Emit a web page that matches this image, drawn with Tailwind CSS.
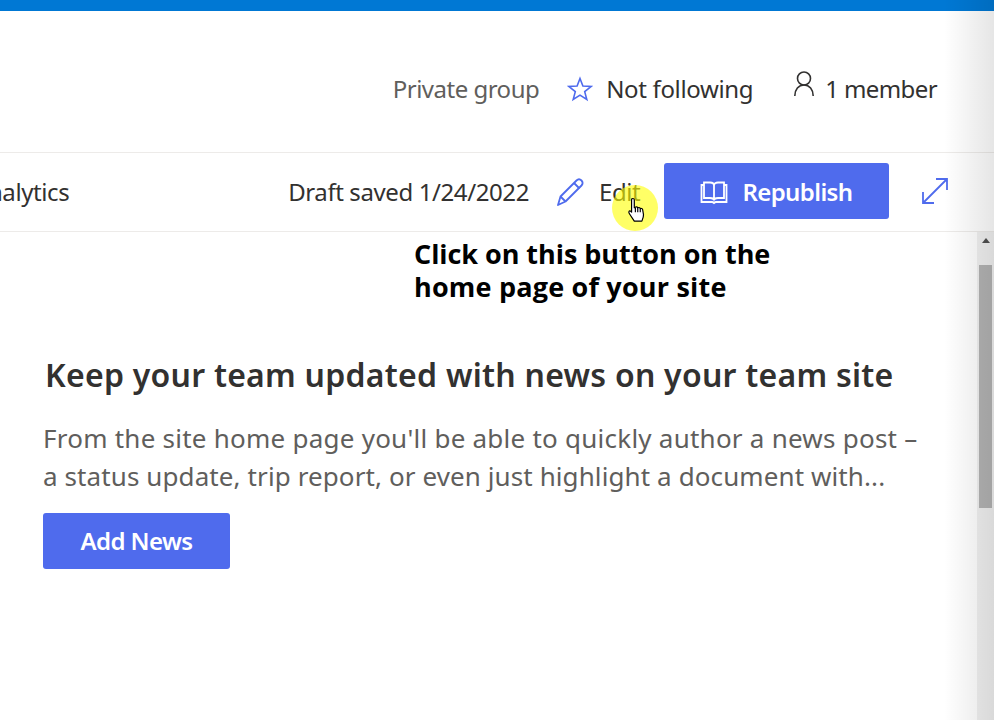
<!DOCTYPE html>
<html lang="en">
  <head>
    <meta charset="UTF-8" />
    <title>Team site</title>
    <script src="https://cdn.jsdelivr.net/npm/@tailwindcss/browser@4"></script>
  </head>
  <body class="bg-white overflow-hidden font-['Noto_Sans',sans-serif]">
    <div class="relative w-[994px] h-[720px] flex flex-col overflow-hidden">
      <!-- Top bar -->
      <div class="h-[11px] shrink-0 bg-[#0078d4]"></div>

      <!-- Group info -->
      <div class="h-[141px] shrink-0 flex items-start justify-end pt-[61px] pr-[57px] text-[24px] leading-[34px] tracking-[-0.5px] text-[#323130]">
        <span class="text-[#605e5c]">Private group</span>
        <svg class="ml-[28px] mt-[4px]" width="26" height="26" viewBox="0 0 26 26" fill="none" stroke="#4f6bed" stroke-width="1.6"><path d="M13 2.500l2.900 7.600 8.100.4-6.300 5.100 2.100 7.900L13 19.100l-6.800 4.400 2.100-7.900L2 10.500l8.100-.4z" /></svg>
        <span class="ml-[13px] tracking-[-0.35px]">Not following</span>
        <svg class="ml-[38px] -mt-[2px]" width="26" height="28" viewBox="0 0 26 28" fill="none" stroke="#323130" stroke-width="1.6"><circle cx="13" cy="8.500" r="6.500" /><path d="M3.800 26c0-6.500 3.800-11 9.200-11s9.200 4.500 9.200 11" /></svg>
        <span class="ml-[8px] tracking-[-0.6px]">1 member</span>
      </div>

      <!-- Toolbar -->
      <div class="h-[80px] shrink-0 flex items-center border-y border-[#edebe9] text-[24px] tracking-[-0.4px] text-[#323130]">
        <span class="-ml-[27px]">Analytics</span>
        <span class="ml-auto">Draft saved 1/24/2022</span>
        <svg class="ml-[26px]" width="32" height="32" viewBox="0 0 32 32" fill="none" stroke="#4f6bed" stroke-width="1.8" stroke-linejoin="round"><path d="M3 29l2.500-8.500L21.500 4.500c1.500-1.500 3.500-1.500 5 0s1.500 3.500 0 5L10.500 25.500z" /><path d="M5.500 20.500l5 5M19 7l5.500 5.500" /></svg>
        <span class="ml-[12px] w-[52px]">Edit</span>
        <div class="ml-[13px] -mt-[2px] pt-[2px] w-[225px] h-[56px] flex items-center justify-center gap-[14px] rounded-[3px] bg-[#4f6bed] text-white font-semibold tracking-[-0.6px]">
          <svg width="28" height="26" viewBox="0 0 28 26" fill="none" stroke="#fff" stroke-width="1.800"><path d="M4 3.500h6c2.200 0 4 1 4 3v15c0-1.500-1.800-2.500-4-2.500H4zM24 3.500h-6c-2.200 0-4 1-4 3v15c0-1.500 1.800-2.500 4-2.500h6z" /><path d="M4 6H1.500v17H12c1 0 1.500.5 2 1 .5-.5 1-1 2-1h10.500V6H24" /></svg>
          <span>Republish</span>
        </div>
        <svg class="ml-[32px] mr-[45px] -mt-[2px]" width="28" height="28" viewBox="0 0 28 28" fill="none" stroke="#4f6bed" stroke-width="1.800"><path d="M2 26L26 2M15 2h11v11M2 15v11h11" /></svg>
      </div>

      <!-- Content -->
      <div class="relative flex-1 flex min-h-0">
        <div class="flex-1 pl-[43px] pt-[123px]">
          <h2 class="pl-[2px] text-[32px] leading-[40px] font-semibold tracking-[0.25px] text-[#323130] whitespace-nowrap">Keep your team updated with news on your team site</h2>
          <p class="mt-[24px] w-[900px] text-[26px] leading-[38px] tracking-[0.24px] text-[#605e5c] whitespace-nowrap">From the site home page you'll be able to quickly author a news post –<br /><span class="tracking-[0.1px]">a status update, trip report, or even just highlight a document with...</span></p>
          <div class="mt-[18px] w-[187px] h-[56px] flex items-center justify-center rounded-[3px] bg-[#4f6bed] text-white text-[24px] font-semibold tracking-[-0.6px]">Add News</div>
        </div>

        <!-- Scrollbar -->
        <div class="w-[17px] shrink-0 flex flex-col items-center bg-[#f1f1f1]">
          <div class="mt-[6px] w-0 h-0 border-x-[4px] border-x-transparent border-b-[5px] border-b-[#505050]"></div>
          <div class="mt-[22px] w-[13px] h-[243px] bg-[#b4b4b4]"></div>
        </div>

        <!-- Annotation -->
        <div class="absolute left-[414px] top-[5px] text-[27px] leading-[33px] font-bold text-black font-['Open_Sans',sans-serif] tracking-[-0.05px] whitespace-nowrap">Click on this button on the<br /><span class="tracking-[0.2px]">home page of your site</span></div>
      </div>

      <!-- Cursor highlight -->
      <div class="absolute left-[612px] top-[185px] w-[46px] h-[46px] rounded-full bg-[#ffff00]/60"></div>
      <svg class="absolute left-[627px] top-[197px]" width="20" height="26" viewBox="0 0 18 24" fill="#fff" stroke="#000" stroke-width="1.100" stroke-linejoin="round"><path d="M4 2.500c0-1.500 2.500-1.500 2.500 0V10l1-.5c.5-.5 2-.5 2.200.5.500-.5 2-.5 2.300.7.500-.4 2-.2 2.200 1l.8 4.500c.2 2-.5 3.500-1.500 6H6.500L2 15.500c-1-1.500-.5-3 1-2.500l1 1z" /><path d="M7.500 10v4M9.700 10v4M12 10.500V14" fill="none" /></svg>

      <!-- Right edge shadow -->
      <div class="absolute inset-y-0 right-0 w-[50px] bg-gradient-to-r from-transparent to-black/10 pointer-events-none"></div>
    </div>
  </body>
</html>
